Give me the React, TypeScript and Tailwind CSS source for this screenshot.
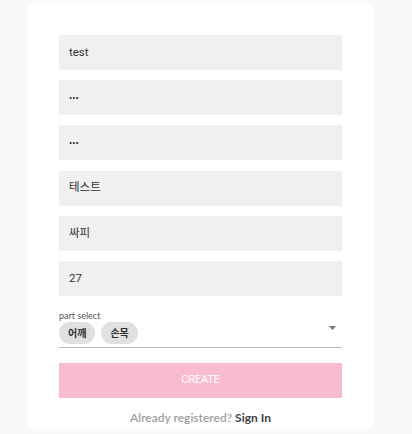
import { useState } from 'react';

const App = () => {
    const [fields] = useState(["test", "•••", "•••", "테스트", "싸피", "27"]);
    const parts = ["어깨", "손목"];

    return (
        <div className="w-[412px] h-[434px] bg-[#f9f9f9] overflow-hidden relative">
            <div className="ml-[28px] mt-[3px] w-[345px] h-[425px] bg-white px-[31px] pt-[32px] flex flex-col">
                {/* Text inputs */}
                <div className="flex flex-col gap-[10.2px]">
                    {fields.map((value, i) => (
                        <div
                            key={i}
                            className="h-[35px] bg-[#f0f0f0] flex items-center pl-[10px] text-[11.5px] text-[#333] font-['Roboto','Noto_Sans_CJK_KR',sans-serif]"
                        >
                            {value.startsWith("•") ? (
                                <span className="tracking-[0px] text-[9.5px] text-[#222]">{value}</span>
                            ) : (
                                value
                            )}
                        </div>
                    ))}
                </div>

                {/* Part select */}
                <div className="mt-[14px] relative border-b border-[#bdbdbd] pb-[3px]">
                    <div className="text-[9px] leading-[11px] text-[#555] font-['Lato','Noto_Sans_CJK_KR',sans-serif]">part select</div>
                    <div className="flex gap-[6px] mt-[1px]">
                        {parts.map(p => (
                            <span
                                key={p}
                                className="h-[22px] px-[9px] rounded-full bg-[#e0e0e0] flex items-center text-[10px] font-bold text-[#333] font-['Noto_Sans_CJK_KR',sans-serif]"
                            >
                                {p}
                            </span>
                        ))}
                    </div>
                    <svg className="absolute right-[6px] top-[16px]" width="7" height="4" viewBox="0 0 7 4">
                        <path d="M0 0 L7 0 L3.5 4 Z" fill="#777" />
                    </svg>
                </div>

                {/* Submit */}
                <button className="mt-[15px] h-[35px] w-full bg-[#f8bbd0] text-white text-[11px] font-['Roboto',sans-serif] tracking-[-0.2px]">
                    CREATE
                </button>

                <p className="mt-[11px] text-center text-[12px] font-['Lato',sans-serif] text-[#9e9e9e] font-semibold">
                    Already registered? <span className="text-[#424242] font-bold">Sign In</span>
                </p>
            </div>
        </div>
    );
};

export default App;
